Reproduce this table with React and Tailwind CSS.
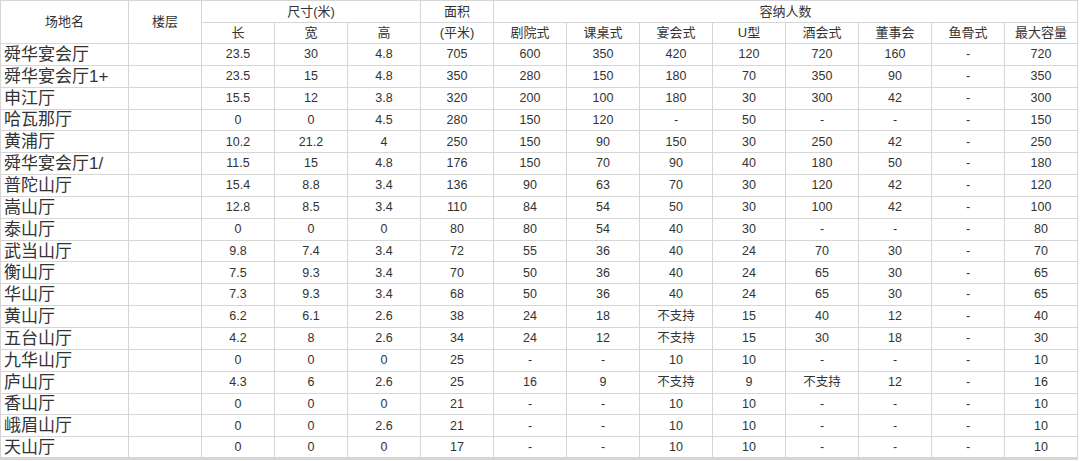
import React from "react";

const rows = [
  ["舜华宴会厅", "23.5", "30", "4.8", "705", "600", "350", "420", "120", "720", "160", "-", "720"],
  ["舜华宴会厅1+", "23.5", "15", "4.8", "350", "280", "150", "180", "70", "350", "90", "-", "350"],
  ["申江厅", "15.5", "12", "3.8", "320", "200", "100", "180", "30", "300", "42", "-", "300"],
  ["哈瓦那厅", "0", "0", "4.5", "280", "150", "120", "-", "50", "-", "-", "-", "150"],
  ["黄浦厅", "10.2", "21.2", "4", "250", "150", "90", "150", "30", "250", "42", "-", "250"],
  ["舜华宴会厅1/", "11.5", "15", "4.8", "176", "150", "70", "90", "40", "180", "50", "-", "180"],
  ["普陀山厅", "15.4", "8.8", "3.4", "136", "90", "63", "70", "30", "120", "42", "-", "120"],
  ["嵩山厅", "12.8", "8.5", "3.4", "110", "84", "54", "50", "30", "100", "42", "-", "100"],
  ["泰山厅", "0", "0", "0", "80", "80", "54", "40", "30", "-", "-", "-", "80"],
  ["武当山厅", "9.8", "7.4", "3.4", "72", "55", "36", "40", "24", "70", "30", "-", "70"],
  ["衡山厅", "7.5", "9.3", "3.4", "70", "50", "36", "40", "24", "65", "30", "-", "65"],
  ["华山厅", "7.3", "9.3", "3.4", "68", "50", "36", "40", "24", "65", "30", "-", "65"],
  ["黄山厅", "6.2", "6.1", "2.6", "38", "24", "18", "不支持", "15", "40", "12", "-", "40"],
  ["五台山厅", "4.2", "8", "2.6", "34", "24", "12", "不支持", "15", "30", "18", "-", "30"],
  ["九华山厅", "0", "0", "0", "25", "-", "-", "10", "10", "-", "-", "-", "10"],
  ["庐山厅", "4.3", "6", "2.6", "25", "16", "9", "不支持", "9", "不支持", "12", "-", "16"],
  ["香山厅", "0", "0", "0", "21", "-", "-", "10", "10", "-", "-", "-", "10"],
  ["峨眉山厅", "0", "0", "2.6", "21", "-", "-", "10", "10", "-", "-", "-", "10"],
  ["天山厅", "0", "0", "0", "17", "-", "-", "10", "10", "-", "-", "-", "10"],
];

const sub = ["剧院式", "课桌式", "宴会式", "U型", "酒会式", "董事会", "鱼骨式", "最大容量"];

const cell = "border border-[#d6d6d6] p-0 text-center align-middle";

export default function App() {
  return (
    <div className="w-[1080px] h-[461px] bg-white overflow-hidden font-['Liberation_Sans','Noto_Sans_CJK_SC',sans-serif] text-[#333]">
      <table className="table-fixed border-collapse border-b-[3px] border-b-[#d6d6d6] w-[1078px]">
        <colgroup>
          <col className="w-[128px]" />
          {Array.from({ length: 13 }).map((_, i) => (
            <col key={i} className="w-[73px]" />
          ))}
        </colgroup>
        <thead className="text-[13px]">
          <tr className="h-[22px]">
            <th rowSpan={2} className={`${cell} font-normal`}>场地名</th>
            <th rowSpan={2} className={`${cell} font-normal`}>楼层</th>
            <th colSpan={3} className={`${cell} font-normal`}>尺寸(米)</th>
            <th className={`${cell} font-normal`}>面积</th>
            <th colSpan={8} className={`${cell} font-normal`}>容纳人数</th>
          </tr>
          <tr className="h-[21px]">
            <th className={`${cell} font-normal`}>长</th>
            <th className={`${cell} font-normal`}>宽</th>
            <th className={`${cell} font-normal`}>高</th>
            <th className={`${cell} font-normal`}>(平米)</th>
            {sub.map((s) => (
              <th key={s} className={`${cell} font-normal`}>{s}</th>
            ))}
          </tr>
        </thead>
        <tbody className="text-[12.5px]">
          {rows.map((r) => (
            <tr key={r[0]} className="h-[21.85px]">
              <td className={`${cell} text-left pl-[3px] text-[17px] leading-none`}>{r[0]}</td>
              <td className={cell}></td>
              {r.slice(1).map((v, i) => (
                <td key={i} className={`${cell} leading-none`}>{v}</td>
              ))}
            </tr>
          ))}
        </tbody>
      </table>
    </div>
  );
}
